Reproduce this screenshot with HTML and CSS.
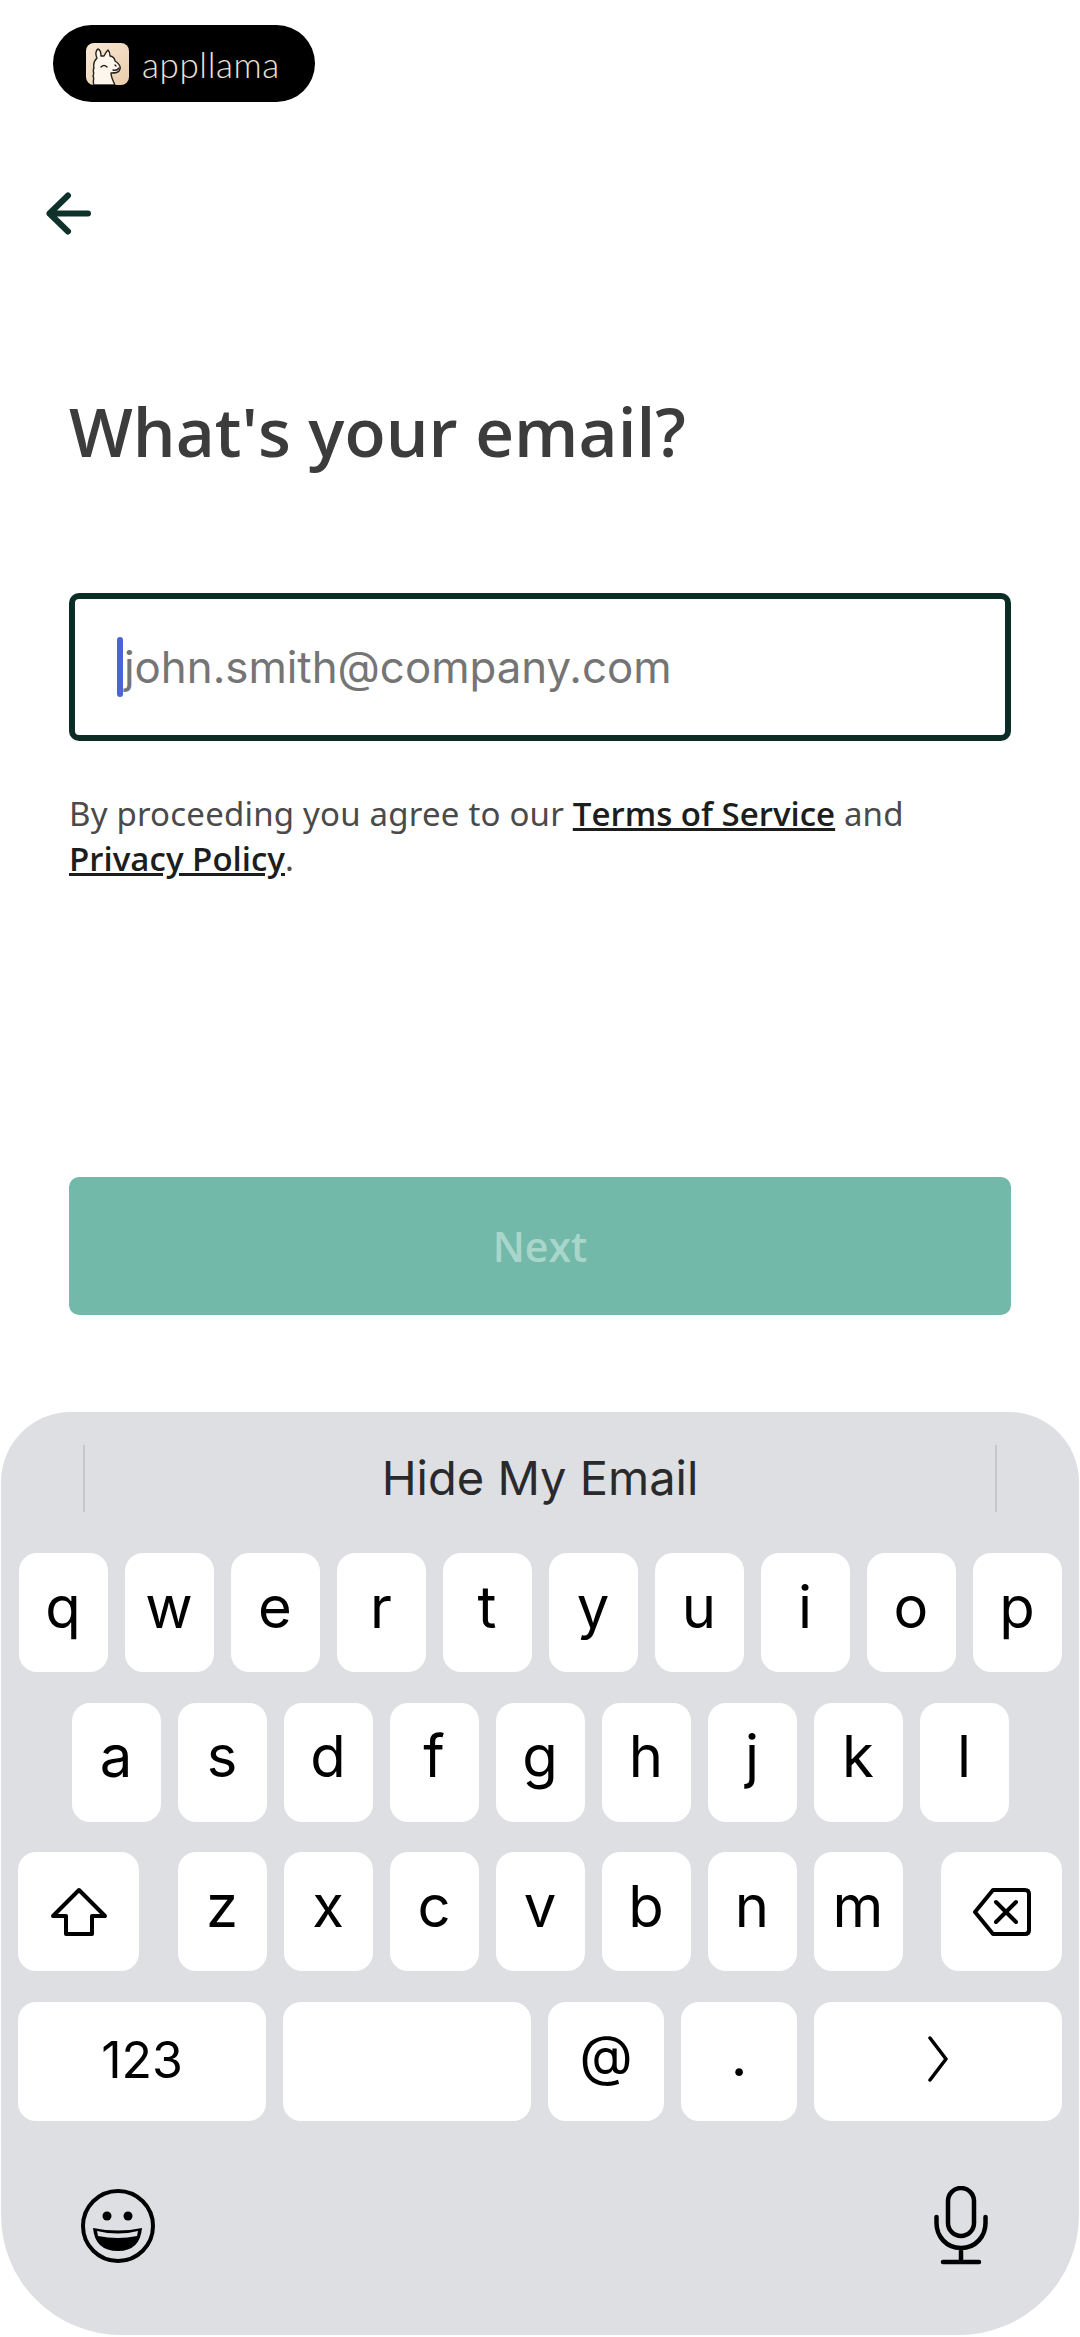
FILE: index.html
```html
<!DOCTYPE html>
<html lang="en">

<head>
  <meta charset="UTF-8" />
  <meta name="viewport" content="width=device-width, initial-scale=1.0" />
  <title>Appllama</title>
  <link rel="stylesheet" href="styles.css">
</head>

<body>
  <div class="brand">
    <svg class="brand-icon" viewBox="0 0 43 42">
      <defs>
        <linearGradient id="tile" x1="0" y1="0" x2="1" y2="1">
          <stop offset="0" stop-color="#f9e9d6" />
          <stop offset="1" stop-color="#e9cdaa" />
        </linearGradient>
      </defs>
      <rect width="43" height="42" rx="8" fill="url(#tile)" />
      <path d="M8 42 C6 38 9 36 7 33 C9 30 6 28 8 25 C7 21 8 18 11 15 C9 11 10 7 12 6 C15 7 15 11 15 13 L18 13 C19 11 20 9 22 7 C24 9 24 11 24 13 C27 13 29 16 29 18 C32 20 35 23 34 26 C33 30 29 30 25 30 C25 34 27 38 29 42 Z" fill="#fdf6ec" stroke="#26211c" stroke-width="1.400" stroke-linejoin="round" />
      <path d="M15 24 Q18 21 21 24 M27 27 Q31 28 33 25 M29 22 L30 23" fill="none" stroke="#26211c" stroke-width="1.400" stroke-linecap="round" />
    </svg>
    <span class="brand-name">appllama</span>
  </div>

  <svg class="back" viewBox="0 0 45 43">
    <path d="M22 3.500 L3.500 21.500 L22 39.500 M3.500 21.500 H42" fill="none" stroke="#0e3229" stroke-width="6" stroke-linecap="round" stroke-linejoin="round" />
  </svg>

  <main class="form">
    <h1>What's your email?</h1>
    <div class="email-field">
      <span class="caret"></span>
      <span class="placeholder">john.smith@company.com</span>
    </div>
    <p class="terms">By proceeding you agree to our <a href="#">Terms of Service</a> and <a href="#">Privacy Policy</a>.</p>
    <button class="next">Next</button>
  </main>

  <section class="keyboard">
    <div class="suggestions">
      <span class="sep"></span>
      <span class="suggestion">Hide My Email</span>
      <span class="sep"></span>
    </div>

    <div class="keys">
      <div class="row">
        <span class="key">q</span><span class="key">w</span><span class="key">e</span><span class="key">r</span><span class="key">t</span><span class="key">y</span><span class="key">u</span><span class="key">i</span><span class="key">o</span><span class="key">p</span>
      </div>
      <div class="row">
        <span class="key">a</span><span class="key">s</span><span class="key">d</span><span class="key">f</span><span class="key">g</span><span class="key">h</span><span class="key">j</span><span class="key">k</span><span class="key">l</span>
      </div>
      <div class="row row-spread">
        <span class="key key-mod">
          <svg width="58" height="50" viewBox="0 0 58 50">
            <path d="M29 3 L55 29 H42 V47 H16 V29 H3 Z" fill="none" stroke="#000" stroke-width="4" stroke-linejoin="round" />
          </svg>
        </span>
        <div class="letters">
          <span class="key">z</span><span class="key">x</span><span class="key">c</span><span class="key">v</span><span class="key">b</span><span class="key">n</span><span class="key">m</span>
        </div>
        <span class="key key-mod">
          <svg width="58" height="48" viewBox="0 0 58 48">
            <path d="M2 24 L20 2 H52 Q56 2 56 6 V42 Q56 46 52 46 H20 Z M23 14 L43 34 M43 14 L23 34" fill="none" stroke="#000" stroke-width="4" stroke-linejoin="round" stroke-linecap="round" />
          </svg>
        </span>
      </div>
      <div class="row">
        <span class="key key-wide key-small">123</span>
        <span class="key key-wide"></span>
        <span class="key key-mid key-at">@</span>
        <span class="key key-mid">.</span>
        <span class="key key-wide key-go">
          <svg width="22" height="46" viewBox="0 0 22 46">
            <path d="M3 2 L19 23 L3 44" fill="none" stroke="#000" stroke-width="3.500" stroke-linecap="round" stroke-linejoin="round" />
          </svg>
        </span>
      </div>
    </div>

    <div class="kb-bottom">
      <svg width="76" height="76" viewBox="0 0 76 76">
        <circle cx="38" cy="38" r="35" fill="none" stroke="#000" stroke-width="4" />
        <circle cx="27" cy="28" r="4.500" />
        <circle cx="48" cy="28" r="4.500" />
        <path d="M13 40 Q38 45 62 40 Q60 63 38 63 Q15 63 13 40 Z" />
        <path d="M17 43 Q38 48 58 43 L57 48 Q38 52 18 48 Z" fill="#dedfe3" />
      </svg>
      <svg width="54" height="80" viewBox="0 0 54 80">
        <rect x="14" y="2" width="26" height="48" rx="13" fill="none" stroke="#000" stroke-width="4.500" />
        <path d="M2.500 31 V37 C2.500 50 12 62 27 62 C42 62 51.500 50 51.500 37 V31 M27 62 V76 M9 76 H45" fill="none" stroke="#000" stroke-width="4.500" stroke-linecap="round" />
      </svg>
    </div>
  </section>
</body>

</html>
```

FILE: styles.css
```css
* {
  box-sizing: border-box;
  margin: 0;
  padding: 0;
}

body {
  width: 1080px;
  height: 2337px;
  background: #fff;
  display: flex;
  flex-direction: column;
  align-items: flex-start;
  overflow: hidden;
  font-family: 'Noto Sans', sans-serif;
}

.brand {
  width: 262px;
  height: 77px;
  margin: 25px 0 0 53px;
  padding-left: 33px;
  background: #000;
  border-radius: 39px;
  display: flex;
  align-items: center;
  gap: 13px;
}

.brand-icon {
  width: 43px;
  height: 42px;
}

.brand-name {
  font-family: 'Lato', sans-serif;
  font-weight: 300;
  font-size: 35px;
  color: #ece2d3;
  letter-spacing: 0.6px;
}

.back {
  width: 45px;
  height: 43px;
  margin: 90px 0 0 46px;
}

.form {
  width: 100%;
  padding: 0 69px;
}

h1 {
  margin-top: 150px;
  font-family: 'Open Sans', sans-serif;
  font-size: 67.500px;
  line-height: 92px;
  font-weight: 600;
  color: #3c3c3c;
}

.email-field {
  position: relative;
  height: 148px;
  margin-top: 116px;
  padding-left: 49px;
  border: 6px solid #0b2d25;
  border-radius: 10px;
  display: flex;
  align-items: center;
}

.caret {
  position: absolute;
  left: 42px;
  top: 38px;
  width: 6px;
  height: 60px;
  border-radius: 3px;
  background: #4a64d8;
}

.placeholder {
  font-family: 'Inter', sans-serif;
  font-size: 43.800px;
  line-height: 60px;
  padding-top: 2px;
  color: #757575;
}

.terms {
  margin-top: 50px;
  font-size: 33px;
  line-height: 45px;
  color: #4a4a4a;
  letter-spacing: 0.2px;
}

.terms a {
  font-family: 'Open Sans', sans-serif;
  color: #1d1d1d;
  font-weight: 600;
  letter-spacing: 0;
}

.next {
  display: block;
  width: 100%;
  height: 138px;
  margin-top: 296px;
  border: none;
  border-radius: 10px;
  background: #73b9a9;
  color: #a9d6cb;
  font-family: 'Open Sans', sans-serif;
  font-size: 41px;
  font-weight: 600;
}

.keyboard {
  width: 1078px;
  height: 923px;
  margin: auto 1px 2px;
  background: #dedfe3;
  border-radius: 70px 70px 120px 120px;
  font-family: 'Inter', sans-serif;
  color: #000;
}

.suggestions {
  height: 141px;
  padding: 33px 82px 0;
  display: flex;
  justify-content: space-between;
  align-items: flex-start;
}

.sep {
  width: 2px;
  height: 67px;
  background: #c6c7cb;
}

.suggestion {
  font-size: 47px;
  line-height: 65px;
  color: #2a2a2c;
}

.keys {
  padding: 0 17px;
  display: flex;
  flex-direction: column;
  align-items: center;
  gap: 30.500px;
}

.row {
  width: 100%;
  display: flex;
  justify-content: center;
  gap: 17px;
}

.row-spread {
  justify-content: space-between;
}

.letters {
  display: flex;
  gap: 17px;
}

.key {
  width: 89px;
  height: 119px;
  padding-bottom: 12px;
  background: #fff;
  border-radius: 18px;
  display: flex;
  align-items: center;
  justify-content: center;
  font-size: 58px;
  flex: none;
}

.key-mod {
  width: 121px;
  padding-bottom: 0;
}

.key-wide {
  width: 248px;
  padding-bottom: 0;
}

.key-mid {
  width: 116px;
}

.key-small {
  font-size: 50px;
  padding-bottom: 2px;
}

.key-at {
  font-size: 55px;
}

.key-go {
  padding-bottom: 5px;
}

.kb-bottom {
  padding: 65px 91px 0 79px;
  display: flex;
  justify-content: space-between;
  align-items: center;
}
```
